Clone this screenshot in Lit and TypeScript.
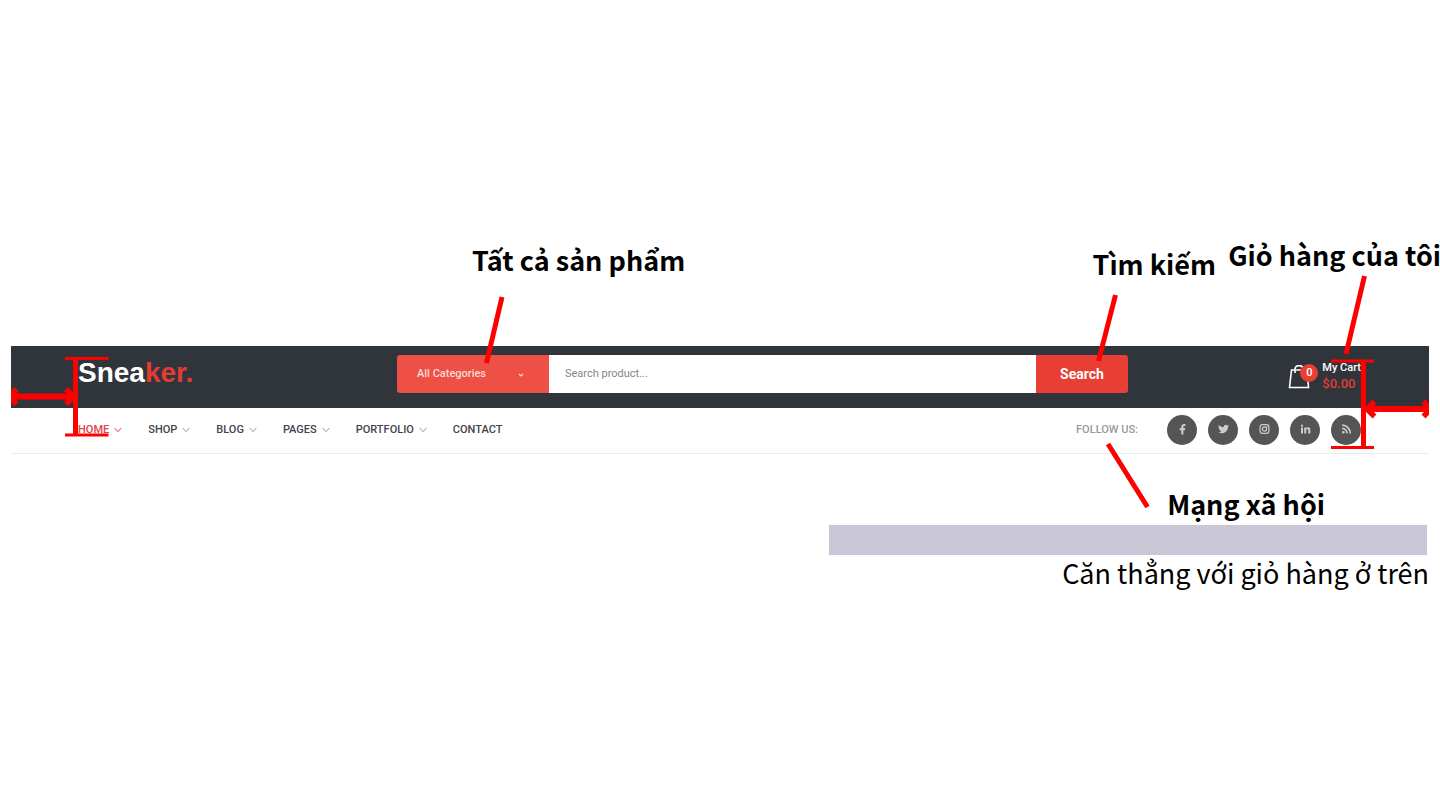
import { LitElement, html, svg, css } from "lit";
import { customElement } from "lit/decorators.js";

const NAV = [
  { label: "HOME", menu: true, active: true },
  { label: "SHOP", menu: true },
  { label: "BLOG", menu: true },
  { label: "PAGES", menu: true },
  { label: "PORTFOLIO", menu: true },
  { label: "CONTACT", menu: false },
];

const SOCIAL = [
  {
    name: "Facebook",
    icon: svg`<path fill="currentColor" d="M4.300 10.500V6.300H2.600V4.300h1.700V3.100C4.300 1.100 5.400 0 7 0c.7 0 1.200.05 1.400.1v1.900h-1c-.8 0-1 .4-1 1v1.300h1.900L8 6.300H6.400v4.200z"/>`,
  },
  {
    name: "Twitter",
    icon: svg`<path fill="currentColor" d="M11 1.700c-.4.2-.8.300-1.200.3.400-.2.800-.7.900-1.100-.4.200-.8.400-1.300.5A2.200 2.200 0 0 0 5.700 3.300 5.900 5.900 0 0 1 .9.900c-.6 1-.2 2.400.7 3-.3 0-.7-.1-1-.3 0 1.100.8 2 1.800 2.200-.3.100-.6.100-1 0 .3.900 1.100 1.500 2.100 1.600A4.600 4.600 0 0 1 .2 8.300 6.300 6.300 0 0 0 9.900 2.900c.4-.3.800-.7 1.100-1.200z"/>`,
  },
  {
    name: "Instagram",
    icon: svg`<g fill="none" stroke="currentColor" stroke-width="1.200"><rect x="1.100" y=".6" width="8.800" height="8.800" rx="2.300"/><circle cx="5.500" cy="5" r="2.100"/></g><circle cx="8" cy="2.600" r=".6" fill="currentColor"/>`,
  },
  {
    name: "LinkedIn",
    icon: svg`<path fill="currentColor" d="M1 3.500h2v6H1zM2 .5a1.150 1.150 0 1 1 0 2.300A1.150 1.150 0 0 1 2 .5zM4.200 3.500h1.900v.8c.3-.5.900-1 1.900-1 1.900 0 2.300 1.200 2.300 2.800v3.400h-2v-3c0-.8 0-1.600-1-1.600s-1.100.8-1.100 1.600v3h-2z"/>`,
  },
  {
    name: "RSS",
    icon: svg`<circle cx="2.400" cy="8.200" r="1.300" fill="currentColor"/><path fill="none" stroke="currentColor" stroke-width="1.700" d="M1.200 4.300a4.900 4.900 0 0 1 4.800 5.100M1.200 1.200a8 8 0 0 1 8 8.200"/>`,
  },
];

@customElement("app-root")
export class AppRoot extends LitElement {
  static styles = css`
    :host {
      display: block;
      min-height: 100vh;
      box-sizing: border-box;
      padding-top: 346px;
      overflow: hidden;
      background: #fff;
      font-family: Roboto, "Liberation Sans", sans-serif;
      font-size: 11px;
      line-height: 16px;
    }
    * { box-sizing: border-box; }
    a { color: inherit; text-decoration: none; }
    svg { display: block; }
    .shell { position: relative; margin: 0 11px; }
    .top {
      display: grid;
      grid-template-columns: 319px 1fr 233px;
      align-items: start;
      padding: 9px 68px 15px 67px;
      background: #30353c;
    }
    .logo {
      font: bold 28px/36px "Liberation Sans", Arial, sans-serif;
      color: #fff;
    }
    .accent { color: #e23c32; }
    .search { position: relative; display: flex; height: 38px; }
    .category { position: relative; width: 152px; }
    .category select {
      appearance: none;
      width: 100%;
      height: 100%;
      margin: 0;
      padding: 0 20px;
      border: 0;
      border-radius: 3px 0 0 3px;
      background: #ee5045;
      color: #fbdad7;
      font: 500 11px/16px Roboto, sans-serif;
    }
    .category .caret {
      position: absolute;
      right: 25px;
      top: 18px;
      color: #fbdad7;
      pointer-events: none;
    }
    .query {
      flex: 1;
      min-width: 0;
      padding: 0 16px;
      border: 0;
      border-radius: 0;
      background: #fff;
      color: #444;
      font: 11px/16px Roboto, sans-serif;
    }
    .query::placeholder { color: #858585; opacity: 1; }
    .submit {
      width: 92px;
      padding: 0;
      border: 0;
      border-radius: 0 3px 3px 0;
      background: #e93e33;
      color: #fff;
      font: bold 14px/16px Roboto, sans-serif;
    }
    .cart {
      justify-self: end;
      display: flex;
      gap: 12px;
      padding-top: 5px;
      color: #fff;
      font-weight: 500;
    }
    .bag { position: relative; padding-top: 5px; }
    .badge {
      position: absolute;
      left: 12px;
      top: 4px;
      width: 18px;
      height: 18px;
      border-radius: 50%;
      background: #e93e33;
      line-height: 18px;
      text-align: center;
    }
    .total { display: block; font-size: 13px; }
    .bar {
      display: flex;
      justify-content: space-between;
      align-items: center;
      height: 46px;
      padding: 0 68px 2px 67px;
      border-bottom: 1px solid #ebebeb;
    }
    .menu { display: flex; gap: 26px; font-weight: 500; color: #41444a; }
    .item { display: flex; align-items: center; gap: 5px; }
    .item svg { color: #999; }
    .item.active, .item.active svg { color: #e0434a; }
    .follow { display: flex; align-items: center; gap: 11px; }
    .follow-label { margin-right: 18px; color: #999; font-weight: 500; }
    .social {
      display: grid;
      place-items: center;
      width: 30px;
      height: 30px;
      border-radius: 50%;
      background: #555;
      color: #ccc;
    }
    .callout {
      position: absolute;
      font: bold 27px/36px "Noto Sans CJK SC", "Noto Sans", sans-serif;
      color: #000;
      white-space: nowrap;
    }
    .callout.products { left: 75px; top: -113px; }
    .callout.find { right: -88px; top: -109px; }
    .callout.basket { right: -12px; top: -109px; }
    .marks { position: absolute; top: -80px; pointer-events: none; }
    .marks.start { left: 0; }
    .marks.end { right: 0; }
    .marks.field { left: 60px; top: -69px; }
    .notes {
      display: flex;
      flex-direction: column;
      align-items: flex-end;
      padding: 32px 11px 0;
      color: #000;
    }
    .notes h2 {
      margin: 0 104px 3px 0;
      font: bold 27px/36px "Noto Sans CJK SC", "Noto Sans", sans-serif;
    }
    .strip { width: 42.2%; height: 30px; margin-right: 2px; background: #cac8d6; }
    .notes p {
      margin: 0;
      font: 27px/36px "Noto Sans CJK SC", "Noto Sans", sans-serif;
    }
  `;

  private chevron() {
    return html`<svg width="8" height="6" viewBox="0 0 8 6" aria-hidden="true">
      <path d="M.7 1 4 4.700 7.300 1" fill="none" stroke="currentColor" />
    </svg>`;
  }

  render() {
    return html`
      <div class="shell">
        <header class="top">
          <a class="logo" href="#">Snea<span class="accent">ker.</span></a>
          <form class="search" @submit=${(e: Event) => e.preventDefault()}>
            <div class="category">
              <select aria-label="Category">
                <option>All Categories</option>
              </select>
              <svg class="caret" width="6" height="5" viewBox="0 0 6 5" aria-hidden="true">
                <path d="M1 1l2 2 2-2" fill="none" stroke="currentColor" stroke-width="1.200" />
              </svg>
            </div>
            <input class="query" type="search" aria-label="Search product" placeholder="Search product..." />
            <button class="submit">Search</button>
            <span class="callout products">Tất cả sản phẩm</span>
            <span class="callout find">Tìm kiếm</span>
            <svg class="marks field" width="60" height="90" aria-hidden="true">
              <path d="M45 11 29.500 77" stroke="#f00" stroke-width="5" />
            </svg>
          </form>
          <a class="cart" href="#">
            <span class="bag">
              <svg width="22" height="24" viewBox="0 0 22 24" fill="none" stroke="#fff" stroke-width="1.600" aria-hidden="true">
                <path d="M3.500 5H19l1.500 17.500H1.500zM7 8V4c0-4.500 8-4.500 8 0" />
              </svg>
              <span class="badge">0</span>
            </span>
            <span>My Cart<span class="accent total">$0.00</span></span>
          </a>
        </header>
        <div class="bar">
          <nav class="menu" aria-label="Main">
            ${NAV.map(
              (n) => html`<a class="item ${n.active ? "active" : ""}" href="#">${n.label}${n.menu ? this.chevron() : ""}</a>`
            )}
          </nav>
          <div class="follow">
            <span class="follow-label">FOLLOW US:</span>
            ${SOCIAL.map(
              (s) => html`<a class="social" href="#" aria-label=${s.name}>
                <svg width="11" height="11" viewBox="0 0 11 11" aria-hidden="true">${s.icon}</svg>
              </a>`
            )}
          </div>
        </div>
        <span class="callout basket">Giỏ hàng của tôi</span>
        <svg class="marks start" width="110" height="180" aria-hidden="true">
          <g fill="none" stroke="#f00">
            <path d="M64.500 91v79" stroke-width="5" />
            <path d="M54 92.500h43.500M54 169h43.500" stroke-width="3" />
            <path d="M1 130.500h62" stroke-width="6" />
            <path d="M5.500 123-1.500 130.500l7 7.500M55 123l7.500 7.500-7.500 7.500" stroke-width="5.500" />
          </g>
        </svg>
        <svg class="marks end" width="360" height="250" aria-hidden="true">
          <g fill="none" stroke="#f00">
            <path d="M294.500 94v88" stroke-width="5" />
            <path d="M262 95h43M262 181.500h43" stroke-width="3" />
            <path d="M298 143h62" stroke-width="6" />
            <path d="M305.500 135.500l-7.500 7.500 7.500 7.500M354.500 135.500l7 7.500-7 7.500" stroke-width="5.500" />
            <path d="M46.500 29 29.500 95M295.500 10 277 88M39 178l39.500 63" stroke-width="5" />
          </g>
        </svg>
      </div>
      <section class="notes">
        <h2>Mạng xã hội</h2>
        <div class="strip"></div>
        <p>Căn thẳng với giỏ hàng ở trên</p>
      </section>
    `;
  }
}
